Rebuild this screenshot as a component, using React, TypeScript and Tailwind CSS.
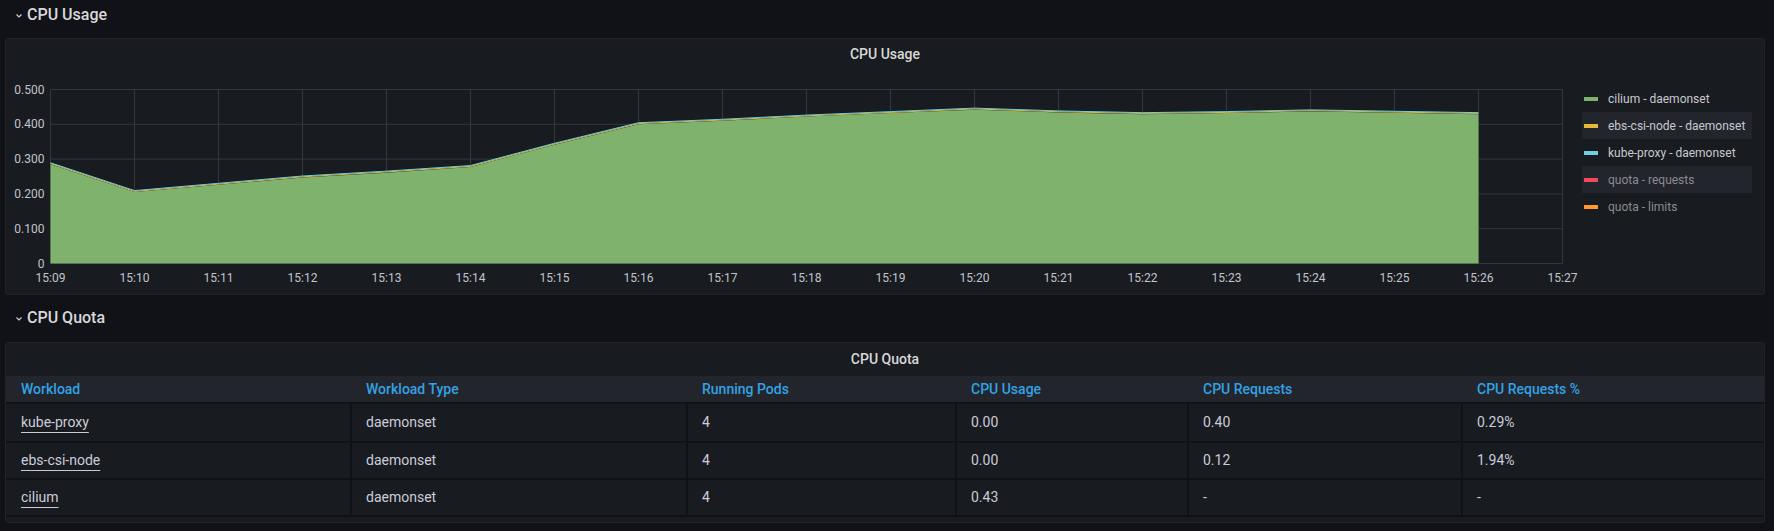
const times = [
  "15:09", "15:10", "15:11", "15:12", "15:13", "15:14", "15:15", "15:16", "15:17", "15:18",
  "15:19", "15:20", "15:21", "15:22", "15:23", "15:24", "15:25", "15:26", "15:27",
];

// cilium usage per minute, the other two series are a hair on top of it
const usage = [
  0.288, 0.208, 0.229, 0.25, 0.264, 0.28, 0.344, 0.403, 0.413, 0.425, 0.435, 0.445, 0.437,
  0.432, 0.435, 0.44, 0.436, 0.432,
];

const X0 = 44.5;
const STEP = 84;
const TOP = 19.5;
const BOTTOM = 193.5;
const SCALE = 348;

const px = (i: number) => X0 + i * STEP;
const py = (v: number) => BOTTOM - v * SCALE;

const legend = [
  { name: "cilium - daemonset", color: "bg-[#7eb26d]", text: "text-[#c8c9d1]", hl: false },
  { name: "ebs-csi-node - daemonset", color: "bg-[#eab839]", text: "text-[#c8c9d1]", hl: true },
  { name: "kube-proxy - daemonset", color: "bg-[#6ed0e0]", text: "text-[#c8c9d1]", hl: false },
  { name: "quota - requests", color: "bg-[#f2495c]", text: "text-[#8a8b93]", hl: true },
  { name: "quota - limits", color: "bg-[#ff9830]", text: "text-[#8a8b93]", hl: false },
];

const rows = [
  { workload: "kube-proxy", type: "daemonset", pods: "4", usage: "0.00", req: "0.40", pct: "0.29%" },
  { workload: "ebs-csi-node", type: "daemonset", pods: "4", usage: "0.00", req: "0.12", pct: "1.94%" },
  { workload: "cilium", type: "daemonset", pods: "4", usage: "0.43", req: "-", pct: "-" },
];

const headers = ["Workload", "Workload Type", "Running Pods", "CPU Usage", "CPU Requests", "CPU Requests %"];

function Chevron() {
  return (
    <svg width="8" height="6" viewBox="0 0 8 6" className="mt-[2px]">
      <path d="M1.5 1.5l2.5 2.5 2.5-2.5" fill="none" stroke="#ccccdc" strokeWidth="1.2" />
    </svg>
  );
}

function RowTitle({ title }: { title: string }) {
  return (
    <div className="flex h-[30px] items-center gap-[4px] pl-[10px]">
      <Chevron />
      <span className="text-[16px] font-medium text-[#d8d9da]">{title}</span>
    </div>
  );
}

function UsageChart() {
  const line = usage.map((v, i) => `${px(i)},${py(v) + 1}`).join(" ");
  const area = `M${px(0)},${BOTTOM} L${line} L${px(usage.length - 1)},${BOTTOM} Z`;
  const yellow = usage.map((v, i) => `${px(i)},${py(v) + 0.3}`).join(" ");
  const blue = usage.map((v, i) => `${px(i)},${py(v) - 0.5}`).join(" ");

  return (
    <svg width="1574" height="224" className="shrink-0">
      {[0, 0.1, 0.2, 0.3, 0.4, 0.5].map((v) => (
        <g key={v}>
          <line x1={X0} x2={px(18)} y1={py(v)} y2={py(v)} stroke="#35373c" strokeWidth="1" />
          <text
            x="38.5"
            y={py(v)}
            textAnchor="end"
            dominantBaseline="central"
            fontSize="12"
            fill="#c3c4cc"
          >
            {v === 0 ? "0" : v.toFixed(3)}
          </text>
        </g>
      ))}
      {times.map((t, i) => (
        <g key={t}>
          <line x1={px(i)} x2={px(i)} y1={TOP} y2={BOTTOM} stroke="#35373c" strokeWidth="1" />
          <text x={px(i)} y="208" textAnchor="middle" dominantBaseline="central" fontSize="12" fill="#c3c4cc">
            {t}
          </text>
        </g>
      ))}
      <path d={area} fill="#7eb26d" />
      <polyline points={yellow} fill="none" stroke="#eab839" strokeWidth="1" />
      <polyline points={blue} fill="none" stroke="#6ed0e0" strokeWidth="1" />
    </svg>
  );
}

export default function App() {
  return (
    <div className="min-h-[531px] bg-[#111217] pl-[5px] pr-[9px] font-['Roboto',sans-serif] text-[#ccccdc]">
      <RowTitle title="CPU Usage" />

      <div className="mt-[8px] h-[257px] rounded-[3px] border border-[#212328] bg-[#181b1f]">
        <div className="flex h-[31px] items-center justify-center text-[14px] font-medium text-[#d8d9da]">
          CPU Usage
        </div>
        <div className="flex">
          <UsageChart />
          <div className="ml-[2px] mt-[15px] w-[170px]">
            {legend.map((l) => (
              <div
                key={l.name}
                className={`flex h-[27px] items-center gap-[10px] pl-[2px] text-[12px] ${l.text} ${
                  l.hl ? "bg-[#22252b]" : ""
                }`}
              >
                <span className={`h-[4px] w-[14px] ${l.color}`} />
                <span>{l.name}</span>
              </div>
            ))}
          </div>
        </div>
      </div>

      <div className="mt-[8px]">
        <RowTitle title="CPU Quota" />
      </div>

      <div className="mt-[9px] h-[181px] overflow-hidden rounded-[3px] border border-[#212328] bg-[#181b1f]">
        <div className="flex h-[33px] items-center justify-center text-[14px] font-medium text-[#d8d9da]">
          CPU Quota
        </div>
        <div className="grid h-[26px] grid-cols-[344px_336px_269px_232px_274px_1fr] items-center bg-[#22252b] text-[14px] font-medium text-[#33a2e5]">
          {headers.map((h, i) => (
            <div key={h} className={i === 0 ? "pl-[15px]" : "pl-[16px]"}>
              {h}
            </div>
          ))}
        </div>
        {rows.map((r, idx) => (
          <div
            key={r.workload}
            className={`grid grid-cols-[344px_336px_269px_232px_274px_1fr] border-t-2 border-[#111217] text-[14px] text-[#ccccdc] ${
              idx === 0 ? "h-[39px]" : "h-[37px]"
            }`}
          >
            <div className="flex items-center pl-[15px]">
              <span className="underline decoration-[#c8c9d1] underline-offset-[5px]">{r.workload}</span>
            </div>
            {[r.type, r.pods, r.usage, r.req, r.pct].map((v, i) => (
              <div key={i} className="flex items-center border-l-2 border-[#111217] pl-[14px]">
                {v}
              </div>
            ))}
          </div>
        ))}
        <div className="h-[2px] bg-[#111217]" />
      </div>
    </div>
  );
}
